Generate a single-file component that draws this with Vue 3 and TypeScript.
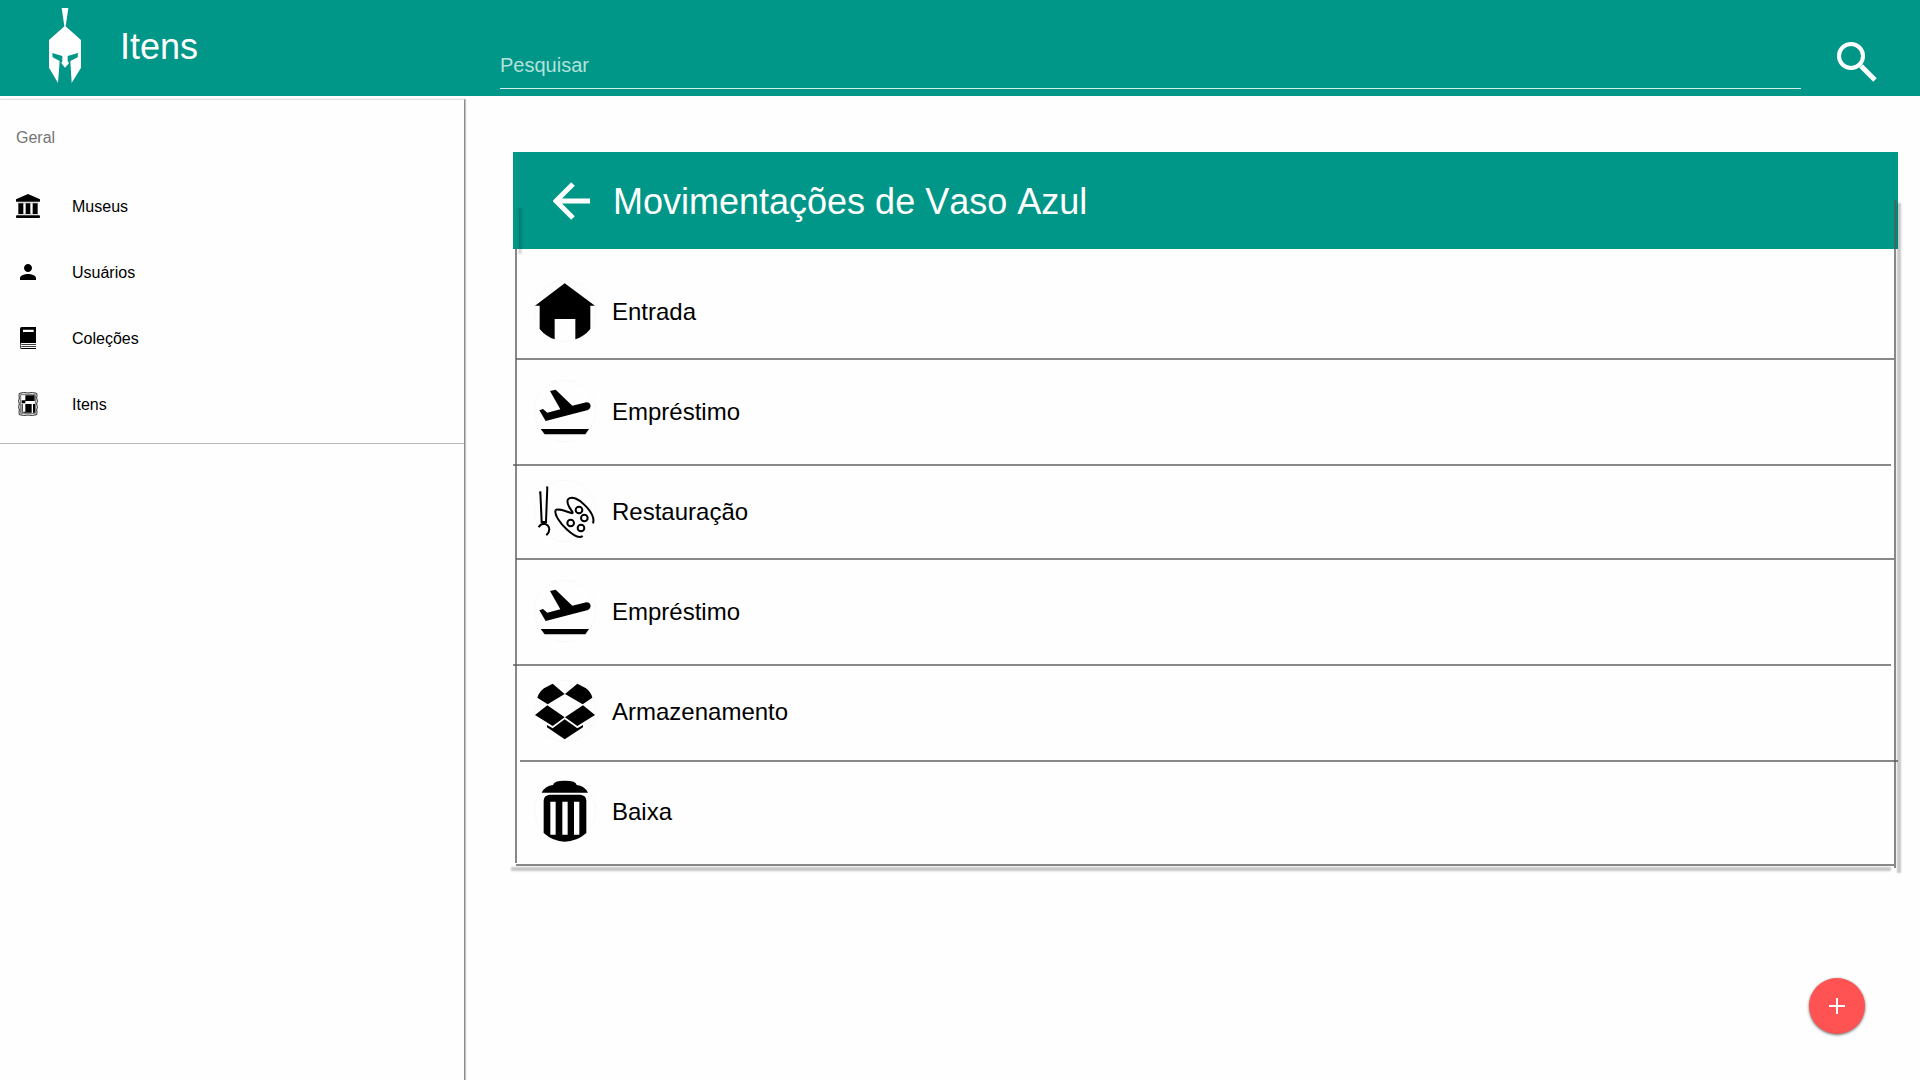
<script setup lang="ts">
import { ref } from 'vue'

type NavIcon = 'museum' | 'person' | 'book' | 'item'
type MoveIcon = 'home' | 'plane' | 'paint' | 'box' | 'trash'
type Rule = 'full' | 'left' | 'right'

interface NavLink {
  label: string
  icon: NavIcon
}

interface Movement {
  id: number
  label: string
  icon: MoveIcon
  rule: Rule
}

const query = ref('')

const links: NavLink[] = [
  { label: 'Museus', icon: 'museum' },
  { label: 'Usuários', icon: 'person' },
  { label: 'Coleções', icon: 'book' },
  { label: 'Itens', icon: 'item' },
]

const movements: Movement[] = [
  { id: 1, label: 'Entrada', icon: 'home', rule: 'full' },
  { id: 2, label: 'Empréstimo', icon: 'plane', rule: 'left' },
  { id: 3, label: 'Restauração', icon: 'paint', rule: 'full' },
  { id: 4, label: 'Empréstimo', icon: 'plane', rule: 'left' },
  { id: 5, label: 'Armazenamento', icon: 'box', rule: 'right' },
  { id: 6, label: 'Baixa', icon: 'trash', rule: 'full' },
]
</script>

<template>
  <div class="page">
    <header class="topbar">
      <div class="brand">
        <svg class="helmet" viewBox="0 0 96 228" aria-hidden="true">
          <path d="M38 0H58L50 55H46Z" />
          <path d="M48 53L96 96V179L68 225L64 159L86 148L87 135L56 144V159L60 166L48 179L37 166L40 159V144L10 135L11 148L32 159L27 225L0 179V96Z" />
        </svg>
        <h1>Itens</h1>
      </div>
      <form class="search" role="search" @submit.prevent>
        <input v-model="query" type="search" placeholder="Pesquisar" aria-label="Pesquisar" />
        <button type="submit" aria-label="Buscar">
          <svg viewBox="0 0 40 40" aria-hidden="true">
            <circle cx="14" cy="14" r="12" />
            <path d="M24 24L38 38" />
          </svg>
        </button>
      </form>
    </header>

    <div class="body">
      <aside class="sidebar">
        <nav aria-label="Geral">
          <p class="caption">Geral</p>
          <a v-for="link in links" :key="link.label" href="#">
            <svg v-if="link.icon === 'museum'" viewBox="0 0 72 72" aria-hidden="true">
              <path d="M36 0L72 16V23H0V16ZM7 28H22V60H7ZM29 28H43V60H29ZM50 28H65V60H50Z" />
              <path d="M5 26H67V28H5ZM5 59H67V61H5Z" opacity=".5" />
              <rect y="64" width="72" height="8" rx="3" />
            </svg>
            <svg v-else-if="link.icon === 'person'" viewBox="0 0 24 24" aria-hidden="true">
              <path d="M12 12c2.21 0 4-1.79 4-4s-1.79-4-4-4-4 1.79-4 4 1.790 4 4 4zm0 2c-2.670 0-8 1.340-8 4v2h16v-2c0-2.660-5.330-4-8-4z" />
            </svg>
            <svg v-else-if="link.icon === 'book'" viewBox="0 0 72 72" aria-hidden="true">
              <path fill-rule="evenodd" d="M17 3H60V51H17Q14 51 14 54V64Q14 66 17 66H60V69H17Q12 69 12 63V9Q12 3 17 3ZM21 11V18H53V11Z" />
              <path d="M16 54H60V56H16ZM16 60H60V62H16Z" />
            </svg>
            <svg v-else viewBox="0 0 72 72" aria-hidden="true">
              <path class="frame" d="M10 4Q23 0 36 3Q49 0 62 4Q64 10 62 18Q66 27 62 36Q66 45 62 54Q64 62 62 68Q49 72 36 69Q23 72 10 68Q8 62 10 54Q6 45 10 36Q6 27 10 18Q8 10 10 4Z" />
              <path class="frame thin" d="M14 8H58V64H14Z" />
              <path d="M28 10H56V27H28ZM17 25H28V34H17ZM28 36H47V62H28ZM51 36H57V62H51ZM17 36H20V62H17ZM22 59H28V62H22Z" />
            </svg>
            <span>{{ link.label }}</span>
          </a>
        </nav>
      </aside>

      <main>
        <section class="panel">
          <header class="panel-head">
            <button type="button" aria-label="Voltar">
              <svg viewBox="0 0 38 38" aria-hidden="true">
                <path d="M20 2L3 19L20 36M3 19H37" />
              </svg>
            </button>
            <h2>Movimentações de Vaso Azul</h2>
          </header>
          <ul>
            <li v-for="move in movements" :key="move.id" :class="move.rule">
              <svg viewBox="0 0 186 186" aria-hidden="true">
                <circle class="ring" cx="93" cy="93" r="92" />
                <path
                  v-if="move.icon === 'home'"
                  d="M92 10L183 77H169V147Q150 170 124 178V117H62V178Q36 170 17 147V77H3Z"
                />
                <path
                  v-else-if="move.icon === 'plane'"
                  d="M48 33L65 29L115 77L157 67C172 66 174 84 162 90L35 123L16 91L27 87L40 98L79 88ZM20 147H165L154 163H32Z"
                />
                <g v-else-if="move.icon === 'paint'" class="stroke">
                  <path d="M19 36L23 126H36L40 20M17 41L20 34M38 23L41 20" />
                  <path d="M14 142Q20 131 30 131Q45 134 46 148Q46 158 37 166" />
                  <path d="M64 91C72 83 95 94 112 99Q118 101 115 95C106 83 97 67 102 58C112 47 135 56 153 76C171 94 182 114 177 130" />
                  <path d="M64 91C62 106 79 131 98 148C116 165 134 177 146 168" />
                  <circle cx="135" cy="90" r="10" />
                  <circle cx="151" cy="114" r="10" />
                  <circle cx="110" cy="129" r="10" />
                  <circle cx="141" cy="144" r="10" />
                </g>
                <path
                  v-else-if="move.icon === 'box'"
                  d="M56 11L92 42L41 73L10 53Q15 36 30 25ZM130 11L93 42L146 73L175 53Q171 36 156 25ZM40 76L92 112L56 138L3 105ZM147 76L93 112L130 138L183 105ZM92 118L130 145L147 135V142L92 178L39 142V135L56 145Z"
                />
                <path
                  v-else
                  fill-rule="evenodd"
                  d="M23 38Q34 17 57 15Q59 2 92 2Q127 2 128 15Q151 17 162 38ZM47 44H139Q157 46 157 62V159Q128 185 92 185Q58 185 29 159V62Q29 46 47 44ZM49 65V164H65V65ZM85 65V164H101V65ZM120 65V164H136V65Z"
                />
              </svg>
              <span>{{ move.label }}</span>
            </li>
          </ul>
        </section>
      </main>
    </div>

    <button class="fab" type="button" aria-label="Adicionar">
      <svg viewBox="0 0 16 16" aria-hidden="true"><path d="M8 0V16M0 8H16" /></svg>
    </button>
  </div>
</template>

<style>
body {
  background: #fefefe;
}
</style>

<style scoped>
.page {
  display: flex;
  flex-direction: column;
  min-height: 100vh;
  font-family: "Liberation Sans", Arial, Helvetica, sans-serif;
  color: #000;
}

h1,
h2,
p,
ul {
  margin: 0;
  padding: 0;
  font-weight: 400;
}

button {
  display: flex;
  align-items: center;
  justify-content: center;
  padding: 0;
  border: 0;
  background: none;
  color: #fff;
  cursor: pointer;
}

.topbar {
  display: flex;
  height: 96px;
  background: #009688;
  color: #fff;
}

.brand {
  display: flex;
  align-items: flex-start;
  flex: 0 0 452px;
  gap: 39px;
  padding: 8px 0 0 49px;
  box-sizing: border-box;
  margin-right: 48px;
}

.helmet {
  width: 32px;
  height: 76px;
  fill: #fff;
}

h1 {
  padding-top: 19px;
  font-size: 36px;
  line-height: 40px;
}

.search {
  display: flex;
  flex: 1;
  align-items: flex-end;
  gap: 36px;
  padding: 0 43px 7px 0;
}

.search input {
  flex: 1;
  min-width: 0;
  height: 46px;
  padding: 0;
  border: 0;
  border-bottom: 1px solid #d5eeeb;
  border-radius: 0;
  outline: 0;
  background: none;
  color: #fff;
  font: 20px/24px "Liberation Sans", Arial, Helvetica, sans-serif;
  appearance: none;
}

.search input::placeholder {
  color: #b5e1dc;
  opacity: 1;
}

.search button {
  height: 47px;
  align-items: flex-start;
}

.search svg {
  width: 40px;
  height: 40px;
  fill: none;
  stroke: #fff;
  stroke-width: 4;
}

.search path {
  stroke-width: 5;
}

.body {
  display: flex;
  flex: 1;
}

.sidebar {
  flex: 0 0 464px;
  margin-top: 3px;
  border-top: 1px solid #e2e2e2;
  border-right: 1px solid #8c8c8c;
  box-shadow: 1px 0 1px #c4c4c4;
}

nav {
  padding-bottom: 6px;
  border-bottom: 1px solid #b8b8b8;
}

.caption {
  padding: 3px 16px 0;
  font-size: 16px;
  line-height: 70px;
  color: #757575;
}

nav a {
  display: flex;
  align-items: center;
  gap: 32px;
  height: 66px;
  padding: 0 16px;
  color: #000;
  font-size: 16px;
  text-decoration: none;
}

nav span,
li span,
h2 {
  padding-top: 2px;
}

nav svg {
  width: 24px;
  height: 24px;
}

.frame {
  fill: none;
  stroke: #222;
  stroke-width: 3;
}

.frame.thin {
  stroke-width: 2;
}

main {
  flex: 1;
  min-width: 0;
  padding: 56px 22px 48px 48px;
}

.panel {
  position: relative;
}

/* side rules run over the lower half of the coloured heading */
.panel::before,
.panel::after {
  content: "";
  position: absolute;
  width: 2px;
  background: rgba(85, 85, 85, 0.7);
}

.panel::before {
  top: 53px;
  bottom: 3px;
  left: 2px;
}

.panel::after {
  top: 48px;
  bottom: -2px;
  right: 2px;
  box-shadow: 4px 4px 2px 1px rgba(0, 0, 0, 0.22);
}

.panel-head {
  position: relative;
  display: flex;
  align-items: center;
  gap: 22px;
  height: 97px;
  padding: 0 40px;
  background: #009688;
  color: #fff;
}

.panel-head::after {
  content: "";
  position: absolute;
  left: 6px;
  bottom: -4px;
  width: 2px;
  height: 44px;
  background: rgba(0, 0, 0, 0.15);
  box-shadow: 0 0 2px 1px rgba(0, 0, 0, 0.12);
}

.panel-head svg {
  width: 38px;
  height: 38px;
  fill: none;
  stroke: #fff;
  stroke-width: 5;
}

h2 {
  font-size: 36px;
  line-height: 40px;
  font-kerning: none;
}

ul {
  padding: 12px 0 5px;
  list-style: none;
}

li {
  position: relative;
  display: flex;
  align-items: center;
  gap: 16px;
  height: 100px;
  padding: 0 21px;
  font-size: 24px;
}

li::after {
  content: "";
  position: absolute;
  right: 4px;
  bottom: 1px;
  left: 3px;
  height: 2px;
  background: rgba(85, 85, 85, 0.7);
}

li.left::after {
  right: 7px;
  bottom: -5px;
  left: 0;
}

li.right::after {
  right: 0;
  bottom: -1px;
  left: 7px;
}

li:last-child::after {
  bottom: -5px;
  box-shadow: -4px 4px 2px 1px rgba(0, 0, 0, 0.22);
}

li svg {
  width: 62px;
  height: 62px;
}

.ring {
  fill: none;
  stroke: #f6f6f6;
  stroke-width: 2;
}

.stroke {
  fill: none;
  stroke: #000;
  stroke-width: 6;
}

.fab {
  position: fixed;
  right: 55px;
  bottom: 46px;
  width: 56px;
  height: 56px;
  border-radius: 50%;
  background: #ff5252;
  box-shadow: 0 1px 3px rgba(0, 0, 0, 0.6);
}

.fab svg {
  width: 16px;
  height: 16px;
  fill: none;
  stroke: #fff;
  stroke-width: 2;
}
</style>
